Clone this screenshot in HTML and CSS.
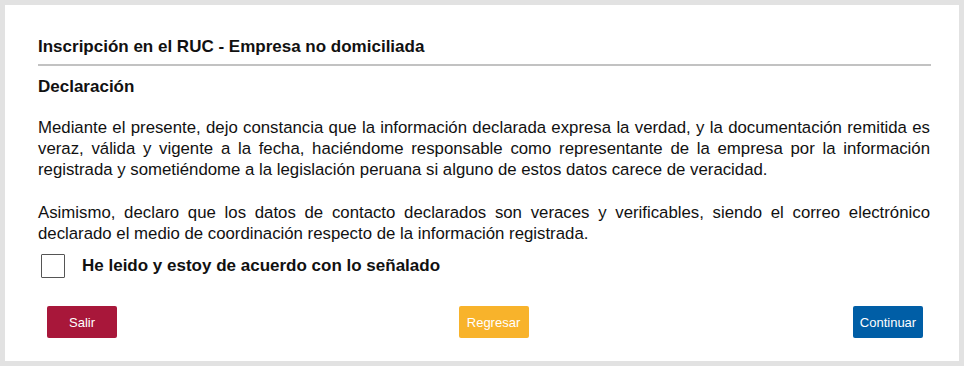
FILE: index.html
```html
<!DOCTYPE html>
<html lang="es">
<head>
  <meta charset="UTF-8" />
  <title>Inscripción en el RUC</title>
  <link rel="stylesheet" href="styles.css">
</head>
<body>
  <div class="card">
    <h1 class="title">Inscripción en el RUC - Empresa no domiciliada</h1>
    <h2 class="subtitle">Declaración</h2>

    <p class="text">Mediante el presente, dejo constancia que la información declarada expresa la verdad, y la documentación remitida es veraz, válida y vigente a la fecha, haciéndome responsable como representante de la empresa por la información registrada y sometiéndome a la legislación peruana si alguno de estos datos carece de veracidad.</p>
    <p class="text">Asimismo, declaro que los datos de contacto declarados son veraces y verificables, siendo el correo electrónico declarado el medio de coordinación respecto de la información registrada.</p>

    <label class="agree">
      <span class="box"></span>
      <span>He leido y estoy de acuerdo con lo señalado</span>
    </label>

    <div class="actions">
      <button class="btn btn-exit">Salir</button>
      <button class="btn btn-back">Regresar</button>
      <button class="btn btn-next">Continuar</button>
    </div>
  </div>
</body>
</html>
```

FILE: styles.css
```css
body {
  margin: 0;
  padding: 5px;
  background: #e2e2e2;
  font-family: "Liberation Sans", Arial, sans-serif;
  color: #111;
}
.card {
  background: #fff;
  width: 954px;
  height: 356px;
  box-sizing: border-box;
  padding: 32px 28px 0 33px;
}
.title {
  font-size: 17px;
  font-weight: bold;
  margin: 0;
  padding-bottom: 7px;
  border-bottom: 2px solid #c2c2c2;
  line-height: 20px;
}
.subtitle {
  font-size: 17px;
  font-weight: bold;
  margin: 11px 0 0 0;
  line-height: 20px;
}
.text {
  font-size: 16.8px;
  line-height: 21px;
  margin: 20px 1px 0 0;
  text-align: justify;
}
.text + .text {
  margin-top: 22px;
}
.agree {
  display: flex;
  align-items: center;
  gap: 17px;
  margin: 10px 0 0 3px;
  font-size: 17px;
  font-weight: bold;
}
.box {
  width: 22px;
  height: 22px;
  border: 1px solid #555;
  border-radius: 1px;
}
.actions {
  display: grid;
  grid-template-columns: 1fr 1fr 1fr;
  margin: 28px 0 0 9px;
  width: 876px;
}
.btn {
  width: 70px;
  height: 32px;
  border: none;
  border-radius: 2px;
  color: #fff;
  font-family: "Liberation Sans", Arial, sans-serif;
  font-size: 13px;
  padding: 0;
}
.btn-exit {
  background: #a8173a;
  justify-self: start;
}
.btn-back {
  background: #f8b32b;
  justify-self: center;
  margin-left: 17px;
}
.btn-next {
  background: #005ea6;
  justify-self: end;
}
```
